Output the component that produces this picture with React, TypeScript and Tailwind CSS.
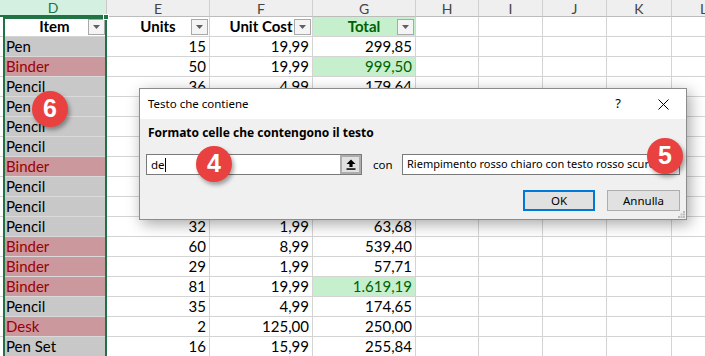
import React from "react";

type Row = { item: string; u: string; c: string; t: string; red?: boolean; green?: boolean };

const rows: Row[] = [
  { item: "Pen", u: "15", c: "19,99", t: "299,85" },
  { item: "Binder", u: "50", c: "19,99", t: "999,50", red: true, green: true },
  { item: "Pencil", u: "36", c: "4,99", t: "179,64" },
  { item: "Pen", u: "27", c: "19,99", t: "539,73" },
  { item: "Pencil", u: "56", c: "2,99", t: "167,44" },
  { item: "Pencil", u: "60", c: "4,99", t: "299,40" },
  { item: "Binder", u: "75", c: "1,99", t: "149,25", red: true },
  { item: "Pencil", u: "90", c: "1,99", t: "179,10" },
  { item: "Pencil", u: "64", c: "4,99", t: "319,36" },
  { item: "Pencil", u: "32", c: "1,99", t: "63,68" },
  { item: "Binder", u: "60", c: "8,99", t: "539,40", red: true },
  { item: "Binder", u: "29", c: "1,99", t: "57,71", red: true },
  { item: "Binder", u: "81", c: "19,99", t: "1.619,19", red: true, green: true },
  { item: "Pencil", u: "35", c: "4,99", t: "174,65" },
  { item: "Desk", u: "2", c: "125,00", t: "250,00", red: true },
  { item: "Pen Set", u: "16", c: "15,99", t: "255,84" },
];

const cellFont = { fontFamily: "Lato, 'Liberation Sans', sans-serif" };
const dlgFont = { fontFamily: "'Noto Sans', 'Open Sans', sans-serif" };

function FilterBtn() {
  return (
    <div className="absolute right-[1px] top-[2px] w-[17px] h-[16px] border border-[#a9a9a9] bg-[#f4f4f4] flex items-center justify-center">
      <svg width="7" height="4" viewBox="0 0 7 4">
        <path d="M0 0 H7 L3.5 4 Z" fill="#606060" />
      </svg>
    </div>
  );
}

function Badge({ n, cls }: { n: string; cls: string }) {
  return (
    <div
      className={`absolute w-[36px] h-[36px] rounded-full bg-[#e8413f] text-white flex items-center justify-center text-[25px] font-bold shadow-[2px_3px_4px_rgba(0,0,0,0.35)] ${cls}`}
      style={{ fontFamily: "'Liberation Sans', Arial, sans-serif" }}
    >
      {n}
    </div>
  );
}

function Blank({ w }: { w: string }) {
  return <div className={`${w} h-full shrink-0 border-r border-b border-[#d4d4d4]`} />;
}

export default function App() {
  const letters: [string, string][] = [
    ["D", "w-[107px]"],
    ["E", "w-[103px]"],
    ["F", "w-[103px]"],
    ["G", "w-[103px]"],
    ["H", "w-[63px]"],
    ["I", "w-[64px]"],
    ["J", "w-[64px]"],
    ["K", "w-[65px]"],
    ["L", "w-[64px]"],
  ];
  return (
    <div className="relative w-[705px] h-[356px] overflow-hidden bg-white text-black" style={cellFont}>
      {/* column headers */}
      <div className="flex h-[17px]">
        {letters.map(([l, w]) => (
          <div
            key={l}
            className={`${w} shrink-0 h-full flex items-center justify-center text-[14px] border-r ${
              l === "D"
                ? "bg-[#d3f0e0] text-[#217346] border-b-2 border-b-[#217346] border-r-[#c9c9c9]"
                : "bg-[#efefef] text-[#444] border-b border-b-[#bcbcbc] border-r-[#d0d0d0]"
            }`}
          >
            {l}
          </div>
        ))}
      </div>
      {/* header row */}
      <div className="flex h-[20px] text-[15px] font-bold">
        <div className="w-[3px] h-full shrink-0 border-b border-[#d4d4d4]" />
        <div className="relative w-[104px] h-full shrink-0 bg-white border-r border-b border-[#d4d4d4] flex items-center justify-center">
          Item
          <FilterBtn />
        </div>
        <div className="relative w-[103px] h-full shrink-0 border-r border-b border-[#d4d4d4] flex items-center justify-center">
          Units
          <FilterBtn />
        </div>
        <div className="relative w-[103px] h-full shrink-0 border-r border-b border-[#d4d4d4] flex items-center justify-center">
          Unit Cost
          <FilterBtn />
        </div>
        <div className="relative w-[103px] h-full shrink-0 bg-[#c6efce] text-[#006100] border-r border-b border-[#d4d4d4] flex items-center justify-center">
          Total
          <FilterBtn />
        </div>
        <Blank w="w-[63px]" />
        <Blank w="w-[64px]" />
        <Blank w="w-[64px]" />
        <Blank w="w-[65px]" />
        <Blank w="w-[64px]" />
      </div>
      {/* data rows */}
      {rows.map((r, i) => (
        <div key={i} className="flex h-[20px] text-[15px]">
          <div className="w-[3px] h-full shrink-0 border-b border-[#d4d4d4]" />
          <div
            className={`w-[104px] h-full shrink-0 border-r border-b border-[#dadada] flex items-center pl-[3px] ${
              r.red ? "bg-[#ca989d] text-[#9c0006]" : "bg-[#c8c8c8]"
            }`}
          >
            {r.item}
          </div>
          <div className="w-[103px] h-full shrink-0 border-r border-b border-[#d4d4d4] flex items-center justify-end pr-[3px]">
            {r.u}
          </div>
          <div className="w-[103px] h-full shrink-0 border-r border-b border-[#d4d4d4] flex items-center justify-end pr-[3px]">
            {r.c}
          </div>
          <div
            className={`w-[103px] h-full shrink-0 border-r border-b border-[#d4d4d4] flex items-center justify-end pr-[3px] ${
              r.green ? "bg-[#c6efce] text-[#006100]" : ""
            }`}
          >
            {r.t}
          </div>
          <Blank w="w-[63px]" />
          <Blank w="w-[64px]" />
          <Blank w="w-[64px]" />
          <Blank w="w-[65px]" />
          <Blank w="w-[64px]" />
        </div>
      ))}

      {/* selection outline */}
      <div className="absolute left-[3px] top-[17px] w-[104px] h-[345px] border-2 border-[#217346] pointer-events-none" />
      <div className="absolute left-[103px] top-[14px] w-[6px] h-[6px] bg-[#217346] border border-white" />

      {/* dialog */}
      <div
        className="absolute left-[139px] top-[88px] w-[548px] h-[132px] border border-[#8c8c8c] bg-[#f0f0f0] shadow-[3px_4px_14px_rgba(0,0,0,0.35)] flex flex-col text-[11.5px]"
        style={dlgFont}
      >
        <div className="h-[30px] bg-white flex items-center pl-[8px] shrink-0">
          <span className="flex-1">Testo che contiene</span>
          <span className="w-[20px] text-center text-[13px] mr-[30px]">?</span>
          <svg width="11" height="11" viewBox="0 0 11 11" className="mr-[17px]">
            <path d="M0.5 0.5 L10.5 10.5 M10.5 0.5 L0.5 10.5" stroke="#000" strokeWidth="1" />
          </svg>
        </div>
        <div className="flex-1 flex flex-col px-[6px] pt-[6px] relative">
          <div className="pl-[2px] font-bold text-[12px] leading-[16px]">Formato celle che contengono il testo</div>
          <div className="flex items-center mt-[13px] h-[21px]">
            <div className="w-[216px] h-full border border-[#7a7a7a] bg-white flex">
              <div className="flex-1 flex items-center pl-[4px]">
                de<span className="inline-block w-[1px] h-[14px] bg-black" />
              </div>
              <div className="w-[21px] h-full bg-[#e1e1e1] border-2 border-[#adadad] flex items-center justify-center">
                <svg width="10" height="11" viewBox="0 0 10 11">
                  <path d="M5 0.5 L9.5 5 H6.6 V8 H3.4 V5 H0.5 Z" fill="#000" />
                  <rect x="0.5" y="9.3" width="9" height="1.5" fill="#000" />
                </svg>
              </div>
            </div>
            <span className="ml-[11px] w-[29px]">con</span>
            <div className="w-[278px] h-full border border-[#7a7a7a] bg-white flex items-center pl-[4px] overflow-hidden whitespace-nowrap relative text-[11px]">
              Riempimento rosso chiaro con testo rosso scuro
              <svg width="8" height="5" viewBox="0 0 8 5" className="absolute right-[3px] top-[10px]">
                <path d="M0 0 L4 4 L8 0" stroke="#606060" fill="none" />
              </svg>
            </div>
          </div>
          <div className="flex justify-end gap-[12px] mt-[15px]">
            <div className="w-[72px] h-[21px] bg-[#e1e1e1] border-2 border-[#0078d7] flex items-center justify-center">OK</div>
            <div className="w-[73px] h-[21px] bg-[#e1e1e1] border border-[#adadad] flex items-center justify-center">Annulla</div>
          </div>
          <svg width="7" height="7" viewBox="0 0 7 7" className="absolute right-[1px] bottom-[1px]">
            <rect x="5" y="0" width="2" height="2" fill="#bcbcbc" />
            <rect x="2.5" y="2.5" width="2" height="2" fill="#bcbcbc" />
            <rect x="5" y="2.5" width="2" height="2" fill="#bcbcbc" />
            <rect x="0" y="5" width="2" height="2" fill="#bcbcbc" />
            <rect x="2.5" y="5" width="2" height="2" fill="#bcbcbc" />
            <rect x="5" y="5" width="2" height="2" fill="#bcbcbc" />
          </svg>
        </div>
      </div>

      <Badge n="6" cls="left-[32px] top-[91px]" />
      <Badge n="4" cls="left-[196px] top-[146px]" />
      <Badge n="5" cls="left-[647px] top-[138px]" />
    </div>
  );
}
